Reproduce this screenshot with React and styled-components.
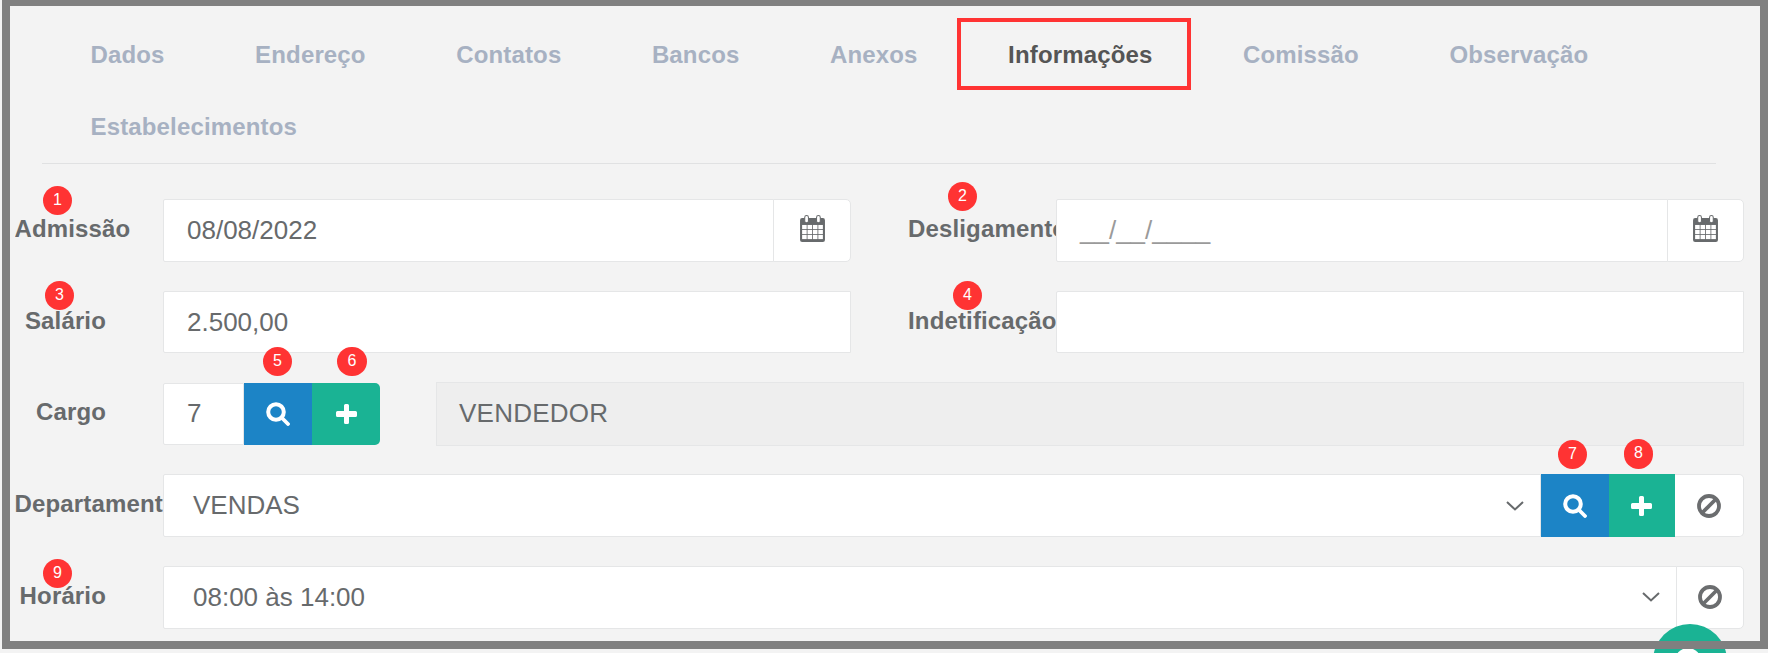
import styled, { createGlobalStyle } from 'styled-components'

const GlobalStyle = createGlobalStyle`
  html, body {
    margin: 0;
    padding: 0;
    background: #f3f3f3;
  }
  * {
    box-sizing: border-box;
  }
`

const Screen = styled.div`
  position: relative;
  width: 1768px;
  height: 653px;
  overflow: hidden;
  padding: 18px 24px 0 14.5px;
  background: #f3f3f3;
  font-family: 'Liberation Sans', Arial, sans-serif;
  color: #676a6c;

  &::after {
    content: '';
    box-sizing: border-box;
    position: absolute;
    top: 0;
    left: 2px;
    right: 0;
    height: 649px;
    border: solid #808080;
    border-width: 6px 8px 8px 8px;
    z-index: 3;
    pointer-events: none;
  }
`

const Tabs = styled.ul`
  display: flex;
  flex-wrap: wrap;
  align-content: flex-start;
  width: 1674px;
  height: 146px;
  margin: 0 0 35px 27.5px;
  padding: 0 0 0 3.25px;
  list-style: none;
  border-bottom: 1px solid #e0e1e2;
`

const Tab = styled.li`
  height: 71.5px;
  padding: 0 45.25px;
  font-size: 24px;
  font-weight: 700;
  letter-spacing: 0.15px;
  line-height: 74px;
  color: ${(p) => (p.$active ? '#555555' : '#a7b1c2')};
`

const Form = styled.div`
  display: flex;
  flex-direction: column;
  gap: 29.25px;
`

const Row = styled.div`
  display: flex;
  height: 62.5px;
`

const Half = styled.div`
  display: flex;
  width: 836px;
  margin-left: ${(p) => p.$offset || 0}px;
`

const LabelCell = styled.div`
  flex: none;
  width: ${(p) => p.$width || 148.5}px;
  height: 100%;
  padding-bottom: 3px;
  display: flex;
  align-items: center;
  overflow: hidden;
`

const Label = styled.label`
  display: block;
  width: 91.5px;
  font-size: 24px;
  font-weight: 700;
  letter-spacing: 0.15px;
  white-space: nowrap;
  text-align: right;
`

const InputGroup = styled.div`
  display: flex;
  flex: ${(p) => (p.$fixed ? 'none' : 1)};
  min-width: 0;
`

const Field = styled.div`
  flex: ${(p) => (p.$width ? 'none' : 1)};
  width: ${(p) => (p.$width ? `${p.$width}px` : 'auto')};
  display: flex;
  align-items: center;
  justify-content: space-between;
  min-width: 0;
  padding: 0 ${(p) => (p.$select ? 16 : 22)}px 0 ${(p) => (p.$select ? 29 : 23)}px;
  background: #ffffff;
  border: 1px solid #e5e6e7;
  border-radius: 2px 0 0 2px;
  font-size: 26px;
  color: ${(p) => (p.$placeholder ? '#9a9a9a' : '#676a6c')};
  white-space: nowrap;
`

const ReadOnlyField = styled.div`
  flex: 1;
  display: flex;
  align-items: center;
  height: 64.5px;
  margin: -1px 0 0 56px;
  padding: 0 22px;
  background: #eeeeee;
  border: 1px solid #e5e6e7;
  font-size: 26px;
  letter-spacing: 0.25px;
`

const Addon = styled.div`
  flex: none;
  width: ${(p) => p.$width || 77.5}px;
  display: flex;
  align-items: center;
  justify-content: center;
  background: #ffffff;
  border: 1px solid #e5e6e7;
  border-left: ${(p) => (p.$flush ? 'none' : '1px solid #e5e6e7')};
  margin-left: ${(p) => (p.$flush ? 0 : -1)}px;
  border-radius: 0 5px 5px 0;
`

const ActionButton = styled.button`
  flex: none;
  width: ${(p) => p.$width}px;
  display: flex;
  align-items: center;
  justify-content: center;
  padding: 0;
  border: none;
  border-radius: ${(p) => (p.$last ? '0 5px 5px 0' : 0)};
  background: ${(p) => (p.$kind === 'add' ? '#1ab394' : '#1c84c6')};
`

const Highlight = styled.div`
  position: absolute;
  top: 18px;
  left: 957px;
  width: 234px;
  height: 72px;
  border: 4px solid #ff3333;
  z-index: 2;
`

const Marker = styled.span`
  position: absolute;
  left: ${(p) => p.$x - 14.75}px;
  top: ${(p) => p.$y - 14.75}px;
  width: 29.5px;
  height: 29.5px;
  border-radius: 50%;
  background: #ff3333;
  color: #ffffff;
  font-size: 16px;
  line-height: 27px;
  text-align: center;
  z-index: 2;
`

const HelpBubble = styled.div`
  position: absolute;
  left: 1653px;
  top: 624px;
  width: 74px;
  height: 74px;
  border-radius: 50%;
  background: #1ab394;
  z-index: 1;

  &::before {
    content: '';
    position: absolute;
    left: 22px;
    top: 24px;
    width: 26px;
    height: 26px;
    border-radius: 50%;
    background: #ffffff;
  }
`

const CalendarSvg = styled.svg`
  margin: 0 0 4px 1px;
`

const Chevron = () => (
  <svg width="18" height="10" viewBox="0 0 18 10" fill="none">
    <path d="M1 1l8 7.5L17 1" stroke="#676a6c" strokeWidth="2" />
  </svg>
)

const SearchIcon = () => (
  <svg width="24" height="24" viewBox="0 0 24 24" fill="none" stroke="#ffffff">
    <circle cx="10" cy="10" r="7.8" strokeWidth="4" />
    <path d="M16 16l6 6" strokeWidth="3.8" strokeLinecap="round" />
  </svg>
)

const PlusIcon = () => (
  <svg width="21" height="20" viewBox="0 0 21 20" fill="#ffffff">
    <path d="M8 1.5A1.5 1.5 0 0 1 9.5 0h2A1.5 1.5 0 0 1 13 1.5V7h6.5A1.5 1.5 0 0 1 21 8.5v3a1.5 1.5 0 0 1-1.5 1.5H13v5.5a1.5 1.5 0 0 1-1.5 1.5h-2A1.5 1.5 0 0 1 8 18.5V13H1.5A1.5 1.5 0 0 1 0 11.5v-3A1.5 1.5 0 0 1 1.5 7H8z" />
  </svg>
)

const BanIcon = () => (
  <svg width="24" height="24" viewBox="0 0 24 24" fill="none" stroke="#6b6d6f" strokeWidth="3.8">
    <circle cx="12" cy="12" r="10" />
    <path d="M5 19L19 5" />
  </svg>
)

const gridCols = [2, 7.2, 12.4, 17.6]
const gridRows = [9.6, 14.4, 19.2]

const CalendarIcon = () => (
  <CalendarSvg width="25" height="27" viewBox="0 0 24 26">
    <rect x="0" y="3" width="24" height="23" rx="2" fill="#676a6c" />
    {gridCols.map((x) =>
      gridRows.map((y) => <rect key={`${x}-${y}`} x={x} y={y} width="4.4" height="4" fill="#ffffff" />)
    )}
    <rect x="4.5" y="0.5" width="3.6" height="7" rx="1.8" fill="#ffffff" stroke="#676a6c" />
    <rect x="15.9" y="0.5" width="3.6" height="7" rx="1.8" fill="#ffffff" stroke="#676a6c" />
  </CalendarSvg>
)

const tabs = ['Dados', 'Endereço', 'Contatos', 'Bancos', 'Anexos', 'Informações', 'Comissão', 'Observação', 'Estabelecimentos']

const markers = [
  [57.5, 200.5],
  [962.5, 196.5],
  [59.5, 295.5],
  [967.5, 295.5],
  [277.5, 361.5],
  [352, 361.5],
  [1572.5, 454.5],
  [1638.5, 454],
  [57.5, 573.5],
]

export default function App() {
  return (
    <Screen>
      <GlobalStyle />
      <Tabs>
        {tabs.map((tab) => (
          <Tab key={tab} $active={tab === 'Informações'}>
            {tab}
          </Tab>
        ))}
      </Tabs>
      <Form>
        <Row>
          <Half>
            <LabelCell>
              <Label>Admissão</Label>
            </LabelCell>
            <InputGroup>
              <Field>08/08/2022</Field>
              <Addon>
                <CalendarIcon />
              </Addon>
            </InputGroup>
          </Half>
          <Half $offset={57.5}>
            <LabelCell $width={148}>
              <Label>Desligamento</Label>
            </LabelCell>
            <InputGroup>
              <Field $placeholder>__/__/____</Field>
              <Addon>
                <CalendarIcon />
              </Addon>
            </InputGroup>
          </Half>
        </Row>
        <Row>
          <Half>
            <LabelCell>
              <Label>Salário</Label>
            </LabelCell>
            <Field>2.500,00</Field>
          </Half>
          <Half $offset={57.5}>
            <LabelCell $width={148}>
              <Label>Indetificação</Label>
            </LabelCell>
            <Field />
          </Half>
        </Row>
        <Row>
          <LabelCell>
            <Label>Cargo</Label>
          </LabelCell>
          <InputGroup $fixed>
            <Field $width={81}>7</Field>
            <ActionButton $width={68}>
              <SearchIcon />
            </ActionButton>
            <ActionButton $width={68} $kind="add" $last>
              <PlusIcon />
            </ActionButton>
          </InputGroup>
          <ReadOnlyField>VENDEDOR</ReadOnlyField>
        </Row>
        <Row>
          <LabelCell>
            <Label>Departamento</Label>
          </LabelCell>
          <InputGroup>
            <Field $select>
              VENDAS
              <Chevron />
            </Field>
            <ActionButton $width={68}>
              <SearchIcon />
            </ActionButton>
            <ActionButton $width={66} $kind="add">
              <PlusIcon />
            </ActionButton>
            <Addon $width={69.5} $flush>
              <BanIcon />
            </Addon>
          </InputGroup>
        </Row>
        <Row>
          <LabelCell>
            <Label>Horário</Label>
          </LabelCell>
          <InputGroup>
            <Field $select>
              08:00 às 14:00
              <Chevron />
            </Field>
            <Addon $width={68.5}>
              <BanIcon />
            </Addon>
          </InputGroup>
        </Row>
      </Form>
      <Highlight />
      {markers.map(([x, y], i) => (
        <Marker key={i} $x={x} $y={y}>
          {i + 1}
        </Marker>
      ))}
      <HelpBubble />
    </Screen>
  )
}
